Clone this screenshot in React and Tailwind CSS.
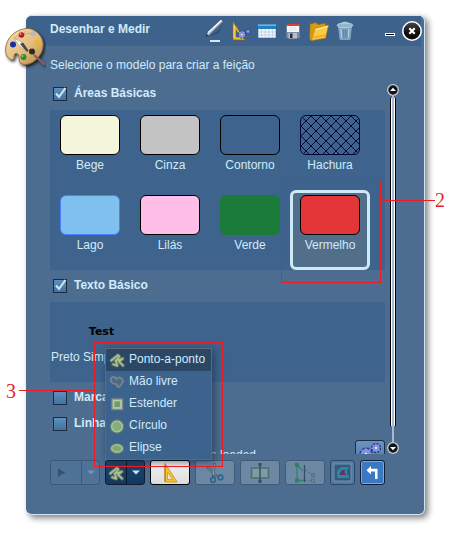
import React from "react";

function Palette() {
  return (
    <svg width="42" height="44" viewBox="0 0 42 44" aria-hidden="true">
      <defs>
        <linearGradient id="wood" x1="0" y1="0" x2="1" y2="1">
          <stop offset="0" stopColor="#f6dfae" />
          <stop offset="0.55" stopColor="#e3bd80" />
          <stop offset="1" stopColor="#b98849" />
        </linearGradient>
        <filter id="paletteShade" x="-20%" y="-20%" width="150%" height="150%">
          <feDropShadow dx="1.5" dy="2" stdDeviation="1.8" floodColor="#000" floodOpacity="0.75" />
        </filter>
      </defs>
      <g filter="url(#paletteShade)">
        <path
          d="M22 2.500C29 1.500 38 8 39 17c.8 8-4 15-10 19-4 2.500-9 3-12 1.500-3-1.500-1-5-2.500-8.500-1.500-3-4.500-1.500-4.500 1 0 2 0 3-1.500 3.500C6 34 3 31 2 27.500 .800 23 2 17 5.500 12 9.500 6.500 15 3.500 22 2.500Z"
          fill="url(#wood)"
          stroke="#8a6330"
          strokeWidth="0.8"
        />
        <path d="m30 29 10 9" stroke="#8e5a60" strokeWidth="2.200" strokeLinecap="round" />
      </g>
      <path d="M10 12c6-4 14-6 22-3M18 35c7 0 13-5 16-12M22 5 12 14" stroke="#c99b5a" strokeWidth="0.7" fill="none" />
      <circle cx="17.500" cy="9" r="2.800" fill="#c4141c" />
      <circle cx="29" cy="7.500" r="2.600" fill="#b9b9b7" />
      <circle cx="33" cy="16.500" r="2.600" fill="#f0b81c" />
      <circle cx="28" cy="25.500" r="3" fill="#2d2a2a" />
      <circle cx="19.500" cy="31" r="3" fill="#2c8f24" />
      <circle cx="9" cy="18.500" r="3" fill="#1b2fa8" />
      <path d="M10.500 12.500 16 15l5 6-1.500 2-6-5Z" fill="#f8f8f8" stroke="#777" strokeWidth="0.400" />
      <path d="m16 18 7 8 1.500-1.500-5.500-8Z" fill="#4a4547" />
      <circle cx="16.500" cy="8" r="0.900" fill="#fff" opacity="0.6" />
      <circle cx="18.500" cy="30" r="0.900" fill="#fff" opacity="0.6" />
    </svg>
  );
}

function PencilIcon() {
  return (
    <svg width="22" height="26" viewBox="0 0 22 26" aria-hidden="true">
      <path d="M4 19 15 12l4-6-4 9Z" fill="#24456b" opacity="0.6" />
      <path d="m2 18.500 1.200-4L16.500 2c1-.9 3.300.6 2.400 1.900L5.500 17Z" fill="#b9c7d4" stroke="#2c3d50" strokeWidth="0.500" />
      <path d="M4.200 14.500 17.200 2.500" stroke="#fff" strokeWidth="1.100" />
      <path d="m5.800 15.800 12.500-12" stroke="#647f99" strokeWidth="0.700" />
      <path d="m2 18.500.7-2.200 1.500 1.300Z" fill="#111" />
      <rect x="6" y="22" width="10" height="2" fill="#cfeafa" />
    </svg>
  );
}

function Gear({ cx, cy, r, fill, teeth }) {
  return (
    <g>
      <circle cx={cx} cy={cy} r={r} fill="none" stroke={teeth} strokeWidth={r * 0.7} strokeDasharray={`${r * 0.45} ${r * 0.335}`} />
      <circle cx={cx} cy={cy} r={r * 0.7} fill="none" stroke={fill} strokeWidth={r * 0.6} />
      <circle cx={cx} cy={cy} r={r * 0.3} fill="#e8ecff" />
    </g>
  );
}

function SquareSettingsIcon() {
  return (
    <svg width="20" height="20" viewBox="0 0 20 20" aria-hidden="true">
      <path d="M2 .5v18.500h12Z" fill="#f1b92c" stroke="#8b6514" strokeWidth="0.700" />
      <path d="M4.800 8v8.200h5Z" fill="#3d648f" />
      <path d="M3 4v13" stroke="#fde28a" strokeWidth="0.800" />
      <Gear cx={11} cy={13.500} r={3.200} fill="#8795e0" teeth="#34408c" />
      <Gear cx={17} cy={10.500} r={2} fill="#7180d4" teeth="#27316f" />
    </svg>
  );
}

function TableIcon() {
  return (
    <svg width="20" height="16" viewBox="0 0 20 16" aria-hidden="true">
      <rect x="1" y="1.500" width="18" height="13.500" fill="#f2f8fc" stroke="#35669b" strokeWidth="0.600" />
      <rect x="1" y="1.500" width="18" height="4.500" fill="#1f82bf" />
      <path d="M1 2.200h18" stroke="#8bd0f2" strokeWidth="1" />
      <path d="M1 9h18M1 12h18M4.500 6v9M8.200 6v9M11.900 6v9M15.600 6v9" stroke="#b0c8da" strokeWidth="0.700" />
    </svg>
  );
}

function SaveIcon() {
  return (
    <svg width="16" height="17" viewBox="0 0 16 17" aria-hidden="true">
      <path d="M1 1.500h14v14H2.500L1 14Z" fill="#7c8ea5" stroke="#4a5d75" strokeWidth="0.600" />
      <rect x="2" y="1.500" width="12" height="7.500" fill="#f7f8fa" />
      <rect x="2" y="1" width="12" height="2" fill="#e23b30" />
      <path d="M4 5h8M4 7h8" stroke="#d5dae1" strokeWidth="0.700" />
      <rect x="3.500" y="10" width="8.500" height="5.500" fill="#b9bfc8" />
      <rect x="5" y="10.500" width="2.500" height="4.500" fill="#272c35" />
    </svg>
  );
}

function FolderIcon() {
  return (
    <svg width="22" height="21" viewBox="0 0 22 21" aria-hidden="true">
      <path d="M2 3 8 1.500l2 2 7.500-1.500V17L3 19.500 1.500 18Z" fill="#d89a12" stroke="#8f6509" strokeWidth="0.700" />
      <path d="M3.500 19.500 7 7.500 20.500 4 17.500 17Z" fill="#fbcb45" stroke="#b98309" strokeWidth="0.600" />
      <path d="m7.500 8.500 12-3" stroke="#fff0a8" strokeWidth="1.200" />
      <path d="m5.500 16.500 12-2.200" stroke="#f0b02a" strokeWidth="2" />
    </svg>
  );
}

function TrashIcon() {
  return (
    <svg width="18" height="20" viewBox="0 0 18 20" aria-hidden="true">
      <path d="M2.500 6h13L14 18.500H4Z" fill="#7da2be" stroke="#8fb0c8" strokeWidth="0.700" />
      <path d="M5 8 5.800 17M12.800 8 12.200 17" stroke="#b9d0df" strokeWidth="1.200" />
      <path d="M7.300 8.500V17M9.200 8.500V17M11 8.500V17" stroke="#587a97" strokeWidth="0.800" />
      <ellipse cx="9" cy="4.300" rx="7.800" ry="2.400" fill="#8fb3ca" stroke="#c4dae6" strokeWidth="0.800" />
      <path d="M5.500 3.200c0-2.700 7-2.700 7 0" fill="#a9c6d8" stroke="#c4dae6" strokeWidth="0.800" />
    </svg>
  );
}

function CloseIcon() {
  return (
    <svg width="20" height="20" viewBox="0 0 20 20" aria-hidden="true">
      <defs>
        <linearGradient id="closeFill" x1="0" y1="0" x2="0" y2="1">
          <stop offset="0" stopColor="#4a4a4a" />
          <stop offset="0.6" stopColor="#0c0c0c" />
        </linearGradient>
      </defs>
      <circle cx="10" cy="10" r="9.200" fill="url(#closeFill)" stroke="#fff" strokeWidth="1.600" />
      <path d="m7.300 7.300 5.400 5.400m0-5.400-5.400 5.400" stroke="#fff" strokeWidth="2.200" />
    </svg>
  );
}

function PolylineIcon() {
  const d = "M3.300 9.500 10 4.200l1.300 1.300-3.300 4 6.700-1.800-3.700 3 4 3.800M7.800 9.500l1.400 5.300-4-1.500";
  return (
    <svg width="18" height="18" viewBox="0 0 18 18" fill="none" strokeLinejoin="round" strokeLinecap="round" aria-hidden="true">
      <path d={d} stroke="#66786f" strokeWidth="3.600" />
      <path d={d} stroke="#a9c48c" strokeWidth="1.700" />
    </svg>
  );
}

function FreehandIcon() {
  return (
    <svg width="18" height="18" viewBox="0 0 18 18" aria-hidden="true">
      <path
        d="M3 5c1.500-2 4-1.500 5.500 1 1-1.500 3-2 4.500-1 2.500 1.500 2.500 4 1 5.500-1.500.5-1.500 4-4 3.500-1.500-.5-.5-2.500-2-3C5.500 11.500 1.500 8.500 3 5Z"
        fill="#4a6b86"
        stroke="#7d868b"
        strokeWidth="1.700"
      />
    </svg>
  );
}

function ExtentIcon() {
  return (
    <svg width="18" height="18" viewBox="0 0 18 18" aria-hidden="true">
      <rect x="4" y="4" width="10.500" height="10.500" fill="#6f9b7a" stroke="#7b867d" strokeWidth="1.500" />
      <rect x="5.500" y="5.500" width="7.500" height="7.500" fill="#6f9b7a" stroke="#b5c9a5" strokeWidth="1.800" />
    </svg>
  );
}

function CircleIcon() {
  return (
    <svg width="18" height="18" viewBox="0 0 18 18" aria-hidden="true">
      <circle cx="9" cy="9.500" r="6.500" fill="#86ad7f" stroke="#68796c" strokeWidth="1.500" />
      <circle cx="9" cy="9.500" r="5.300" fill="#86ad7f" stroke="#a9c79a" strokeWidth="1.300" />
    </svg>
  );
}

function EllipseIcon() {
  return (
    <svg width="18" height="18" viewBox="0 0 18 18" aria-hidden="true">
      <ellipse cx="9" cy="9.500" rx="6.500" ry="4.800" fill="#86ad7f" stroke="#68796c" strokeWidth="1.500" />
      <ellipse cx="9" cy="9.500" rx="5.300" ry="3.600" fill="#7dab78" stroke="#a9c79a" strokeWidth="1.300" />
    </svg>
  );
}

function Caret({ color }) {
  return (
    <svg width="8" height="5" viewBox="0 0 8 5" aria-hidden="true">
      <path d="M0 0.500h8L4 4.500Z" fill={color} />
    </svg>
  );
}

function SetSquareIcon() {
  return (
    <svg width="18" height="22" viewBox="0 0 18 22" aria-hidden="true">
      <path d="M4 1.500v18.500h12Z" fill="#f4c430" stroke="#c48b16" strokeWidth="0.800" />
      <path d="M6.500 10v7.500h5Z" fill="#e6e6e6" stroke="#c48b16" strokeWidth="0.600" />
      <path d="M4 3v16.500" stroke="#9c7418" strokeWidth="1" />
    </svg>
  );
}

function CutIcon() {
  return (
    <svg width="22" height="22" viewBox="0 0 22 22" aria-hidden="true">
      <path d="M3 4.500 13 14.500M10.500 1 9 15" stroke="#45627a" strokeWidth="2.600" />
      <path d="M4 5.500 12 13.500M10.400 2 9.200 13" stroke="#8ea8bb" strokeWidth="0.900" />
      <circle cx="9" cy="18" r="2.300" fill="none" stroke="#2d648f" strokeWidth="1.700" />
      <circle cx="16.500" cy="15.500" r="2.300" fill="none" stroke="#2d648f" strokeWidth="1.700" />
    </svg>
  );
}

function SplitIcon() {
  return (
    <svg width="22" height="22" viewBox="0 0 22 22" aria-hidden="true">
      <rect x="2.500" y="6" width="17" height="10" fill="#7b9da0" stroke="#4f6d74" strokeWidth="1.500" />
      <path d="M11 2v18" stroke="#324e67" strokeWidth="1.400" />
      <rect x="9.500" y="1" width="3" height="3" fill="#324e67" />
      <rect x="9.500" y="18" width="3" height="3" fill="#324e67" />
    </svg>
  );
}

function ReshapeIcon() {
  return (
    <svg width="24" height="22" viewBox="0 0 24 22" aria-hidden="true">
      <path d="M4 3v16M4 3l6 6M4 18.500h8" stroke="#397e78" strokeWidth="1.300" />
      <path d="M11.500 3v17" stroke="#324e67" strokeWidth="1.300" />
      <path d="m12 8 8 5M12 18.500h8" stroke="#566f86" strokeWidth="1.200" strokeDasharray="2 2" />
      <rect x="2" y="1" width="4" height="4" fill="#2c8060" />
      <rect x="2" y="16.500" width="4" height="4" fill="#2c8060" />
      <rect x="18.500" y="11.500" width="3" height="3" fill="none" stroke="#566f86" />
      <rect x="18.500" y="17" width="3" height="3" fill="none" stroke="#566f86" />
    </svg>
  );
}

function UnionIcon() {
  return (
    <svg width="19" height="19" viewBox="0 0 19 19" aria-hidden="true">
      <rect x="1" y="1" width="17" height="17" fill="#35597c" stroke="#7093ad" />
      <path d="M4 15V8l4-4h8l-2 4v3.500l2 1V15Z" fill="#2489ac" />
      <path d="m6.500 11 2-3.500L12 6.500l-.5 3L13 12H7Z" fill="#702f4f" />
    </svg>
  );
}

function UndoIcon() {
  return (
    <svg width="15" height="15" viewBox="0 0 15 15" aria-hidden="true">
      <path d="M1.500 5.200 6 1v2.800h6.500V14H10V6.600H6v3Z" fill="#fff" />
    </svg>
  );
}

function Category({ label, checked, tall }) {
  return (
    <label className={"flex items-start gap-[7px] pt-[7px] pl-[3px] " + (tall ? "h-8" : "h-[26px]")}>
      <span className="mt-[2px] grid size-[14px] place-items-center">
        <input
          type="checkbox"
          defaultChecked={checked}
          className="peer col-start-1 row-start-1 size-[14px] appearance-none border border-[#1c2b3d] bg-linear-to-b from-[#5e8fbe] to-[#40739f]"
        />
        <svg
          viewBox="0 0 14 14"
          className="pointer-events-none invisible col-start-1 row-start-1 size-[14px] peer-checked:visible"
          aria-hidden="true"
        >
          <path d="M3 6.500 6 10l6.500-9" fill="none" stroke="#d5e7f3" strokeWidth="2" />
        </svg>
      </span>
      <span className="leading-4 font-bold">{label}</span>
    </label>
  );
}

function Hatch() {
  return (
    <svg className="size-full" aria-hidden="true">
      <defs>
        <pattern id="hatch" width="10" height="10" patternUnits="userSpaceOnUse">
          <path d="M0 0 10 10M10 0 0 10" stroke="#04043a" strokeWidth="1" />
        </pattern>
      </defs>
      <rect width="100%" height="100%" fill="url(#hatch)" />
    </svg>
  );
}

const areas = [
  { name: "Bege", look: "border-black bg-[#f5f5dc]" },
  { name: "Cinza", look: "border-black bg-[#c3c3c3]" },
  { name: "Contorno", look: "border-black" },
  { name: "Hachura", look: "border-[#04043a]", hatch: true },
  { name: "Lago", look: "border-[#4a80ff] bg-[#80c0ee]" },
  { name: "Lilás", look: "border-black bg-[#ffbee8]" },
  { name: "Verde", look: "border-[#1b7b38] bg-[#1b7b38]" },
  { name: "Vermelho", look: "border-black bg-[#e43639]", selected: true },
];

function Template({ name, look, hatch, selected }) {
  return (
    <button
      type="button"
      aria-pressed={Boolean(selected)}
      className={
        "flex h-20 w-20 flex-col items-center rounded-md border-[3px] pt-[2px] " +
        (selected ? "border-[#cfeaf7] bg-[#516e8a]" : "border-transparent")
      }
    >
      <span className={"h-10 w-[60px] shrink-0 overflow-hidden rounded-md border " + look}>{hatch && <Hatch />}</span>
      <span className="mt-[2px] leading-4">{name}</span>
    </button>
  );
}

const shapes = [
  { name: "Ponto-a-ponto", Icon: PolylineIcon, active: true },
  { name: "Mão livre", Icon: FreehandIcon },
  { name: "Estender", Icon: ExtentIcon },
  { name: "Círculo", Icon: CircleIcon },
  { name: "Elipse", Icon: EllipseIcon },
];

function ShapeMenu() {
  return (
    <div
      role="menu"
      className="absolute bottom-full -left-px z-10 mb-px w-[107px] border border-[#62686f] bg-[#3b638d] shadow-[2px_2px_8px_rgba(20,35,55,0.6)]"
    >
      {shapes.map(({ name, Icon, active }) => (
        <button
          key={name}
          type="button"
          role="menuitem"
          className={"flex h-[22px] w-full items-center gap-[3px] pl-[2px] whitespace-nowrap " + (active ? "bg-[#2a4865]" : "")}
        >
          <Icon />
          <span className="mb-[2px] leading-4">{name}</span>
        </button>
      ))}
    </div>
  );
}

function ScrollKnob({ down }) {
  return (
    <button type="button" aria-label={down ? "Rolar para baixo" : "Rolar para cima"} className="size-3">
      <svg width="12" height="12" viewBox="0 0 12 12" aria-hidden="true">
        <circle cx="6" cy="6" r="5.300" fill="#101419" stroke="#c8ced6" strokeWidth="1.300" />
        <path d={down ? "M3 5h6L6 8.200Z" : "M3 7h6L6 3.800Z"} fill="#fff" />
      </svg>
    </button>
  );
}

const headerTools = [
  ["Desenhar", PencilIcon],
  ["Medir", SquareSettingsIcon],
  ["Tabela", TableIcon],
  ["Salvar", SaveIcon],
  ["Abrir", FolderIcon],
  ["Excluir", TrashIcon],
];

const tool = "flex h-[25px] items-center justify-center rounded-[3px] border";
const faded = "w-10 border-[#405b77] bg-[#6c88a3]";

export default function App() {
  return (
    <div className="relative min-h-screen overflow-hidden bg-white pt-[15px] pr-[35px] pb-5 pl-[26px] font-['Liberation_Sans',Arial,sans-serif] text-[12px] text-[#d0ebfa]">
      <main className="relative rounded-md border-y border-r border-[#cfe6f2] bg-[#4d6d90] shadow-[3px_3px_6px_rgba(0,0,0,0.5)]">
        <div className="absolute top-[10px] -left-[22px]">
          <Palette />
        </div>

        <header className="mr-[3px] flex h-[30px] items-center rounded-tl-md bg-[#3d628c] pl-6">
          <h1 className="mb-1 leading-4 font-bold whitespace-nowrap">Desenhar e Medir</h1>
          <nav className="ml-auto flex h-full">
            {headerTools.map(([name, Icon]) => (
              <button key={name} type="button" aria-label={name} className="flex w-[26px] items-center justify-center">
                <Icon />
              </button>
            ))}
          </nav>
          <button type="button" aria-label="Minimizar" className="ml-[27px] flex h-full w-[10px] items-end pb-[10px]">
            <span className="h-[3px] w-full border border-white bg-black" />
          </button>
          <button type="button" aria-label="Fechar" className="-mr-px ml-[7px] shrink-0">
            <CloseIcon />
          </button>
        </header>

        <p className="h-8 pt-[11px] pl-6 leading-4">Selecione o modelo para criar a feição</p>

        <div className="flex h-[376px] gap-[2px] pr-[25px] pl-6">
          <div className="min-w-0 flex-1 overflow-hidden">
            <Category label="Áreas Básicas" checked tall />
            <div className="grid grid-cols-[repeat(auto-fill,80px)] bg-[#3e648d]">
              {areas.map((area) => (
                <Template key={area.name} {...area} />
              ))}
            </div>

            <Category label="Texto Básico" checked tall />
            <div className="h-20 bg-[#3e648d]">
              <button type="button" className="flex w-[102px] flex-col pt-[22px] pl-px text-left whitespace-nowrap">
                <span className="self-center font-['DejaVu_Sans',sans-serif] text-[11px] leading-4 font-bold text-black">Test</span>
                <span className="mt-[9px] leading-4">Preto Simples</span>
              </button>
            </div>

            <Category label="Marcadores" />
            <Category label="Linhas" />
            <div className="flex items-start pt-[6px]">
              <p className="mt-[7px] w-[206px] text-right leading-4">No templates loaded</p>
              <button
                type="button"
                aria-label="Configurar"
                className="ml-auto flex h-[25px] w-[30px] items-center justify-center rounded-[3px] border border-[#1d2f45] bg-linear-to-b from-[#6a93bf] to-[#4f7cab]"
              >
                <svg width="26" height="21" viewBox="0 0 26 21" aria-hidden="true">
                  <Gear cx={9} cy={12} r={5} fill="#8791e6" teeth="#39428f" />
                  <Gear cx={19} cy={6} r={3.800} fill="#8791e6" teeth="#252d6b" />
                </svg>
              </button>
            </div>
          </div>

          <div className="flex w-3 flex-col items-center pt-[6px]">
            <ScrollKnob />
            <span className="h-[2px] w-[2px] bg-[#a9b8cc]" />
            <span className="flex h-[328px] w-[6px] justify-center border-x border-black bg-white">
              <span className="w-[2px] bg-[#a9b8cc]" />
            </span>
            <span className="w-[2px] flex-1 bg-[#a9b8cc]" />
            <ScrollKnob down />
          </div>
        </div>

        <div className="mt-[6px] mb-[29px] flex gap-[5px] pl-6">
          <div className="flex h-[25px] w-[50px] rounded-[3px] border border-[#3d5976] bg-[#4f7397]">
            <button type="button" aria-label="Selecionar" disabled className="flex flex-1 items-center pl-[7px]">
              <svg width="8" height="10" viewBox="0 0 8 10" aria-hidden="true">
                <path d="M0 0 8 5.500 3.500 6 0 9.500Z" fill="#35536f" />
              </svg>
            </button>
            <button type="button" aria-label="Opções de seleção" disabled className="flex w-[18px] items-center justify-center border-l border-[#3d5976]">
              <Caret color="#7293b3" />
            </button>
          </div>

          <div className="relative flex h-[25px] w-10 rounded-[3px] border border-[#101c2b] bg-linear-to-b from-[#1f456e] to-[#123860]">
            <button type="button" aria-label="Ponto-a-ponto" className="flex flex-1 items-center justify-center">
              <PolylineIcon />
            </button>
            <button type="button" aria-label="Escolher forma" className="flex w-[18px] items-center justify-center border-l border-[#0a1a2c]">
              <Caret color="#cfe6f7" />
            </button>
            <ShapeMenu />
          </div>

          <button type="button" aria-label="Esquadro" className={tool + " w-10 border-black bg-linear-to-b from-[#f4f4f4] to-[#dcdcdc]"}>
            <SetSquareIcon />
          </button>
          <button type="button" aria-label="Cortar" disabled className={tool + " " + faded}>
            <CutIcon />
          </button>
          <button type="button" aria-label="Dividir" disabled className={tool + " " + faded}>
            <SplitIcon />
          </button>
          <button type="button" aria-label="Remodelar" disabled className={tool + " " + faded}>
            <ReshapeIcon />
          </button>
          <button type="button" aria-label="Unir" disabled className={tool + " w-[25px] border-[#2c4560] bg-[#4f7ba6]"}>
            <UnionIcon />
          </button>
          <button type="button" aria-label="Desfazer" className={tool + " w-[25px] border-[#0f1e33] bg-[#3a78c4] shadow-[inset_0_0_0_1px_#7ea9dc]"}>
            <UndoIcon />
          </button>
        </div>
      </main>

      <div className="pointer-events-none absolute top-[181px] left-[281px] z-20 h-[102px] w-[100px] border border-[#ed1c24]" />
      <div className="pointer-events-none absolute top-[200px] left-[381px] z-20 flex items-center text-[#ed1c24]">
        <span className="h-px w-[54px] bg-[#ed1c24]" />
        <span className="-mt-[11px] -mb-[9px] font-['Liberation_Serif',serif] text-[20px] leading-5">2</span>
      </div>
      <div className="pointer-events-none absolute top-[342px] left-[94px] z-20 h-[125px] w-[129px] border border-[#ed1c24]" />
      <div className="pointer-events-none absolute top-[390px] left-[6px] z-20 flex items-center gap-[3px] text-[#ed1c24]">
        <span className="-my-[10px] font-['Liberation_Serif',serif] text-[20px] leading-5">3</span>
        <span className="h-px w-[75px] bg-[#ed1c24]" />
      </div>
    </div>
  );
}
